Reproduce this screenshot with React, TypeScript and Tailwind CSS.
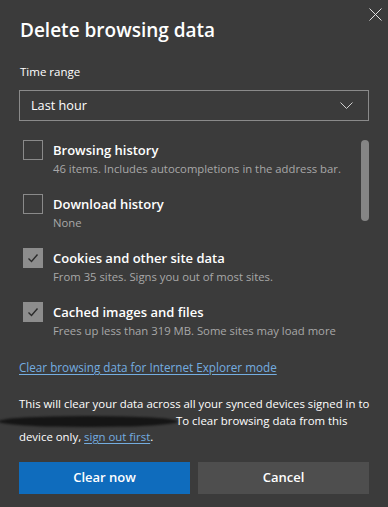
import React from "react";

const Check = () => (
  <svg width="14" height="14" viewBox="0 0 14 14" fill="none">
    <path d="M2.5 7.5 L5.5 10.5 L11.5 3.5" stroke="#2b2b2b" strokeWidth="1.4" />
  </svg>
);

function Row({ title, sub, checked }: { title: string; sub: string; checked?: boolean }) {
  return (
    <div className="flex gap-[10px] h-[54px]">
      <div
        className={
          "w-[20px] h-[20px] shrink-0 border flex items-center justify-center " +
          (checked ? "bg-[#8d8d8d] border-[#8d8d8d]" : "border-[#8a8a8a]")
        }
      >
        {checked && <Check />}
      </div>
      <div className="flex flex-col">
        <div className="mt-[1px] text-[13px] font-semibold text-white leading-[18px] whitespace-nowrap">{title}</div>
        <div className="mt-[2px] text-[11.3px] text-[#a8a8a8] leading-[16px] whitespace-nowrap">{sub}</div>
      </div>
    </div>
  );
}

export default function App() {
  return (
    <div
      className="relative w-[388px] h-[507px] bg-[#3b3b3b] text-white overflow-hidden"
      style={{ fontFamily: '"Open Sans", "Noto Sans", sans-serif' }}
    >
      <svg className="absolute left-[369px] top-[8px]" width="13" height="13" viewBox="0 0 13 13">
        <path d="M0.5 0.5 L12.5 12.5 M12.5 0.5 L0.5 12.5" stroke="#e0e0e0" strokeWidth="1" />
      </svg>
      <div className="px-[19px] pt-[16px]">
        <div className="text-[19px] font-semibold leading-[28px] pl-[1px]">Delete browsing data</div>
        <div className="mt-[20px] text-[11.5px] leading-[16px] pl-[1px]">Time range</div>
        <div className="mt-[10px] h-[31px] border border-[#8a8a8a] flex items-center justify-between pl-[11px] pr-[15px]">
          <span className="text-[12.7px]">Last hour</span>
          <svg width="13" height="8" viewBox="0 0 13 8">
            <path d="M0.5 0.5 L6.5 6.5 L12.5 0.5" stroke="#cfcfcf" strokeWidth="1" fill="none" />
          </svg>
        </div>
        <div className="relative mt-[19px] h-[205px] overflow-hidden pl-[4px]">
          <div className="flex flex-col">
            <Row title="Browsing history" sub="46 items. Includes autocompletions in the address bar." />
            <Row title="Download history" sub="None" />
            <Row title="Cookies and other site data" sub="From 35 sites. Signs you out of most sites." checked />
            <Row title="Cached images and files" sub="Frees up less than 319 MB. Some sites may load more" checked />
          </div>
          <div className="absolute right-0 top-0 w-[8px] h-[81px] rounded-full bg-[#858585]" />
        </div>
        <a className="block mt-[13px] text-[11.7px] leading-[18px] text-[#74ade0] underline underline-offset-2 whitespace-nowrap">
          Clear browsing data for Internet Explorer mode
        </a>
        <p className="relative mt-[20px] text-[11.4px] leading-[16.5px] text-white whitespace-nowrap">
          This will clear your data across all your synced devices signed in to
          <br />
          <span className="relative inline-block w-[157px] h-[12px] align-middle">
            <span className="absolute left-[-21px] top-[1px] w-[180px] h-[11px] bg-[#151515] rounded-[50%] blur-[1px]" />
          </span>
          To clear browsing data from this
          <br />
          device only,{" "}
          <span className="text-[#74ade0] underline underline-offset-2">sign out first</span>.
        </p>
        <div className="mt-[16px] flex gap-[8px]">
          <button className="w-[172px] h-[32px] bg-[#0f6cbd] text-[13px] font-semibold text-white">Clear now</button>
          <button className="w-[172px] h-[32px] bg-[#4e4e4e] text-[13px] font-semibold text-white">Cancel</button>
        </div>
      </div>
    </div>
  );
}
